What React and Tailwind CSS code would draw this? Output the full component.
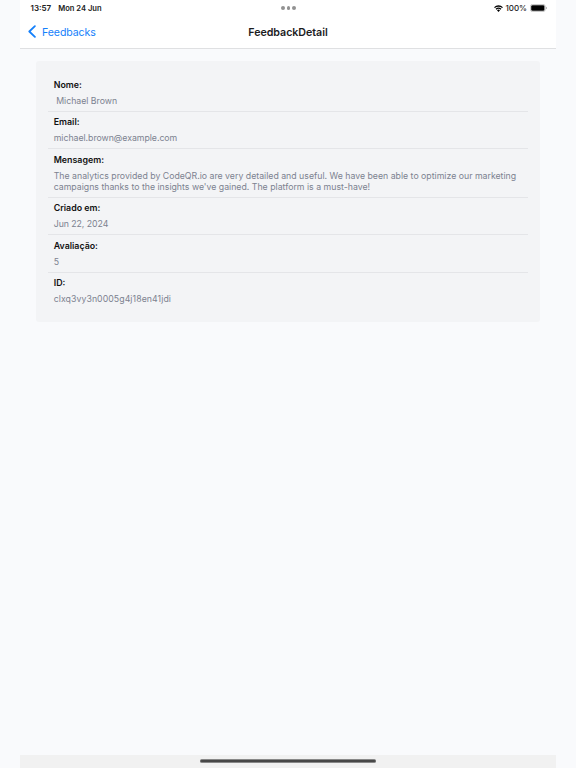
const fields = [
  { label: "Nome:", lines: ["\u00a0Michael Brown"], tracking: "tracking-normal" },
  { label: "Email:", lines: ["michael.brown@example.com"], tracking: "tracking-[-0.02px]" },
  {
    label: "Mensagem:",
    lines: [
      "The analytics provided by CodeQR.io are very detailed and useful. We have been able to optimize our marketing",
      "campaigns thanks to the insights we've gained. The platform is a must-have!",
    ],
    tracking: "tracking-[0.006px]",
  },
  { label: "Criado em:", lines: ["Jun 22, 2024"], tracking: "tracking-[-0.04px]" },
  { label: "Avaliação:", lines: ["5"], tracking: "tracking-normal" },
  { label: "ID:", lines: ["clxq3vy3n0005g4j18en41jdi"], tracking: "tracking-[0.07px]" },
];

function StatusBar() {
  return (
    <div className="grid h-4 grid-cols-3 items-center pl-[10.5px] pr-[9.5px] text-[8px] font-semibold text-[#222]">
      <div className="flex items-baseline gap-[7px] whitespace-nowrap">
        <span>13:57</span>
        <span className="text-[7.6px]">Mon 24 Jun</span>
      </div>
      <div className="flex justify-center gap-[1.8px]">
        <i className="size-[3.5px] rounded-full bg-[#929292]" />
        <i className="size-[3.5px] rounded-full bg-[#929292]" />
        <i className="size-[3.5px] rounded-full bg-[#929292]" />
      </div>
      <div className="flex items-center justify-end">
        <svg className="mr-[2px] h-[7px] w-[9px]" viewBox="0 0 18 14" fill="none" stroke="#000" strokeWidth="2.6">
          <path d="M1 5.2a11.5 11.5 0 0 1 16 0" />
          <path d="M4 8.6a7.2 7.2 0 0 1 10 0" />
          <path d="M9 13.8 6 10.7a4.2 4.2 0 0 1 6 0Z" fill="#000" stroke="none" />
        </svg>
        <span className="mr-[2.5px] font-medium">100%</span>
        <svg className="h-2 w-[17px]" viewBox="0 0 17 8">
          <rect x=".4" y=".4" width="14.8" height="7.2" rx="2.2" fill="#fff" stroke="#aaa" strokeWidth=".7" />
          <rect x="1.2" y="1.2" width="13.2" height="5.6" rx="1.4" fill="#000" />
          <path d="M16 2.8q1 .3 1 1.2t-1 1.2Z" fill="#aaa" />
        </svg>
      </div>
    </div>
  );
}

function NavBar() {
  return (
    <div className="grid h-8 grid-cols-3 items-center">
      <div className="flex items-center gap-[6px] pl-2 text-[#1480fb]">
        <svg className="h-[13px] w-2" viewBox="0 0 8 13" fill="none" stroke="currentColor" strokeWidth="1.8" strokeLinecap="round" strokeLinejoin="round">
          <path d="M6.9 1.1 1.3 6.5l5.6 5.4" />
        </svg>
        <span className="pt-[1.5px] text-[10.6px] tracking-[-0.1px]">Feedbacks</span>
      </div>
      <h1 className="pt-[1.5px] text-center text-[10.7px] font-semibold tracking-[-0.05px] text-[#1c1c1e]">FeedbackDetail</h1>
    </div>
  );
}

export default function App() {
  return (
    <div className="flex h-screen flex-col overflow-hidden bg-[#f9fafc] px-5 font-['Inter','Liberation_Sans',sans-serif]">
      <header className="h-[48.5px] shrink-0 border-b border-[#dfe0e2] bg-white">
        <StatusBar />
        <NavBar />
      </header>
      <main className="flex-1 px-4 pt-[12.5px]">
        <section className="rounded-[3px] bg-[#f3f4f6] px-3 pb-[11.8px] pt-[13.2px]">
          {fields.map(({ label, lines, tracking }) => (
            <div key={label} className="border-b border-[#e4e5e8] pb-[3.75px] pl-[5.7px] pt-[4.5px] leading-[11px] last:border-transparent">
              <h2 className="text-[8.85px] font-semibold text-[#111]">{label}</h2>
              <div className="mt-[6.25px] text-[8.74px] text-[#7c8290]">
                {lines.map((line) => (
                  <p key={line} className={`whitespace-nowrap ${tracking}`}>{line}</p>
                ))}
              </div>
            </div>
          ))}
        </section>
      </main>
      <footer className="flex h-[13px] shrink-0 justify-center bg-[#f1f1f1] pt-1">
        <div className="h-[4px] w-[176px] rounded-full border-y border-[#888] bg-[#484848]" />
      </footer>
    </div>
  );
}
